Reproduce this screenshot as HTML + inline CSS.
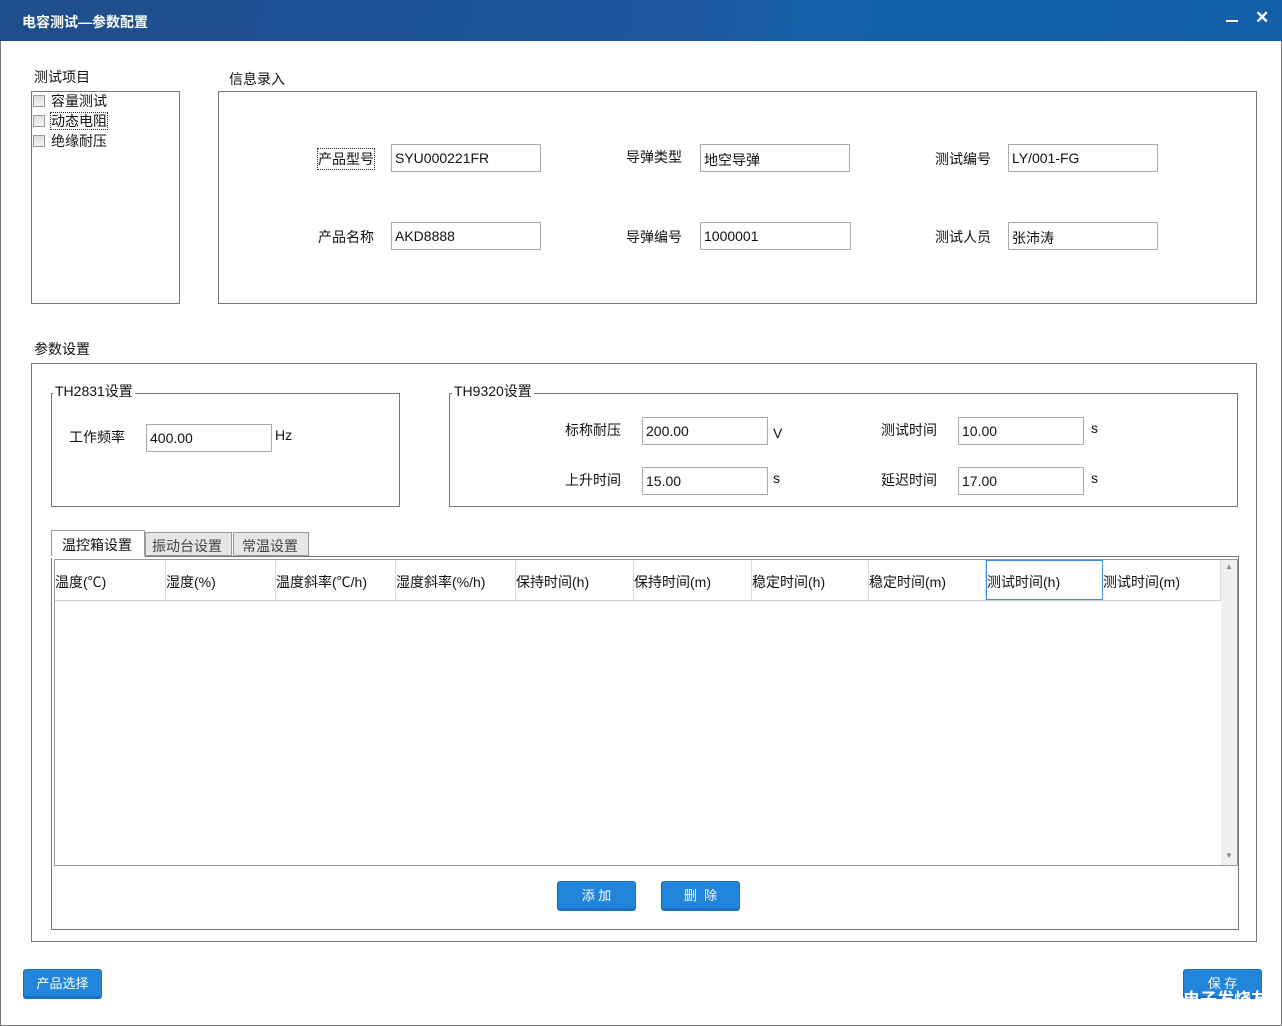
<!DOCTYPE html>
<html><head><meta charset="utf-8"><style>
*{margin:0;padding:0;box-sizing:border-box}
body{width:1282px;height:1026px;position:relative;background:#fff;font-family:"Liberation Sans","Microsoft YaHei","Noto Sans CJK SC",sans-serif;font-size:14px;color:#111;overflow:hidden}
.a{position:absolute}
.box{position:absolute;border:1px solid #777}
.in{position:absolute;border:1px solid #aaa;height:28px;background:#fff;padding:5px 0 0 3px;font-size:14px}
.lb{position:absolute;font-size:14px}
.gl{position:absolute;background:#fff;padding:0 2px;font-size:14px}
.btn{position:absolute;background:#2285dc;border:1px solid #1a6fc0;border-radius:3px;color:#fff;text-align:center;font-size:13px;box-shadow:inset 0 -2px 0 #1a70c8}
.cb{display:inline-block;width:12px;height:12px;border:1px solid #999;background:linear-gradient(#ddd,#f6f6f6);vertical-align:-1px;margin-right:6px}
.th{position:absolute;top:0;height:40px;border-right:1px solid #ddd;padding-top:12px;font-size:14px}
</style></head><body>
<div class="a" style="left:0;top:0;width:1282px;height:41px;background:linear-gradient(100deg,#1f4d8c 0%,#1c5496 40%,#1d58a0 55%,#1560a8 62%,#135fa8 100%)"></div>
<div class="a" style="left:22px;top:12px;color:#fff;font-weight:bold;font-size:14px">电容测试—参数配置</div>
<div class="a" style="left:1226px;top:20px;width:12px;height:2px;background:#fff"></div>
<div class="a" style="left:1255px;top:8px;color:#fff;font-weight:bold;font-size:17px">✕</div>
<div class="a" style="left:0;top:41px;width:1px;height:985px;background:#777"></div>
<div class="a" style="left:1281px;top:41px;width:1px;height:985px;background:#777"></div>
<div class="a" style="left:0;top:1025px;width:1282px;height:1px;background:#777"></div>

<div class="lb" style="left:34px;top:67px">测试项目</div>
<div class="box" style="left:31px;top:91px;width:149px;height:213px"></div>
<div class="lb" style="left:33px;top:91px;line-height:20px">
<div><span class="cb"></span>容量测试</div>
<div><span class="cb"></span><span style="outline:1px dotted #333">动态电阻</span></div>
<div><span class="cb"></span>绝缘耐压</div></div>

<div class="lb" style="left:229px;top:69px">信息录入</div>
<div class="box" style="left:218px;top:91px;width:1039px;height:213px"></div>
<div class="lb" style="left:318px;top:149px;outline:1px dotted #333">产品型号</div>
<div class="in" style="left:391px;top:144px;width:150px">SYU000221FR</div>
<div class="lb" style="left:626px;top:147px">导弹类型</div>
<div class="in" style="left:700px;top:144px;width:150px">地空导弹</div>
<div class="lb" style="left:935px;top:149px">测试编号</div>
<div class="in" style="left:1008px;top:144px;width:150px">LY/001-FG</div>
<div class="lb" style="left:318px;top:227px">产品名称</div>
<div class="in" style="left:391px;top:222px;width:150px">AKD8888</div>
<div class="lb" style="left:626px;top:227px">导弹编号</div>
<div class="in" style="left:700px;top:222px;width:151px">1000001</div>
<div class="lb" style="left:935px;top:227px">测试人员</div>
<div class="in" style="left:1008px;top:222px;width:150px">张沛涛</div>

<div class="lb" style="left:34px;top:339px">参数设置</div>
<div class="box" style="left:31px;top:363px;width:1226px;height:579px"></div>

<div class="box" style="left:51px;top:393px;width:349px;height:114px"></div>
<div class="gl" style="left:53px;top:381px">TH2831设置</div>
<div class="lb" style="left:69px;top:427px">工作频率</div>
<div class="in" style="left:146px;top:424px;width:126px">400.00</div>
<div class="lb" style="left:275px;top:427px">Hz</div>

<div class="box" style="left:449px;top:393px;width:789px;height:114px"></div>
<div class="gl" style="left:452px;top:381px">TH9320设置</div>
<div class="lb" style="left:565px;top:420px">标称耐压</div>
<div class="in" style="left:642px;top:417px;width:126px">200.00</div>
<div class="lb" style="left:773px;top:425px">V</div>
<div class="lb" style="left:881px;top:420px">测试时间</div>
<div class="in" style="left:958px;top:417px;width:126px">10.00</div>
<div class="lb" style="left:1091px;top:420px">s</div>
<div class="lb" style="left:565px;top:470px">上升时间</div>
<div class="in" style="left:642px;top:467px;width:126px">15.00</div>
<div class="lb" style="left:773px;top:470px">s</div>
<div class="lb" style="left:881px;top:470px">延迟时间</div>
<div class="in" style="left:958px;top:467px;width:126px">17.00</div>
<div class="lb" style="left:1091px;top:470px">s</div>

<div class="box" style="left:51px;top:556px;width:1188px;height:374px"></div>
<div class="a" style="left:51px;top:530px;width:94px;height:28px;border:1px solid #999;border-bottom:none;background:#fff;padding:4px 0 0 10px">温控箱设置</div>
<div class="a" style="left:145px;top:532px;width:87px;height:24px;border:1px solid #999;background:#e6e6e6;padding:3px 0 0 6px;color:#444">振动台设置</div>
<div class="a" style="left:233px;top:532px;width:76px;height:24px;border:1px solid #999;background:#e6e6e6;padding:3px 0 0 8px;color:#444">常温设置</div>
<div class="a" style="left:51px;top:556px;width:94px;height:2px;background:#fff"></div>

<div class="box" style="left:54px;top:559px;width:1184px;height:307px;border-color:#999"></div>
<div class="a" style="left:55px;top:560px;width:1166px;height:41px;border-bottom:1px solid #ccc">
<div class="th" style="left:0;width:111px">温度(℃)</div>
<div class="th" style="left:111px;width:110px">湿度(%)</div>
<div class="th" style="left:221px;width:120px">温度斜率(℃/h)</div>
<div class="th" style="left:341px;width:120px">湿度斜率(%/h)</div>
<div class="th" style="left:461px;width:118px">保持时间(h)</div>
<div class="th" style="left:579px;width:118px">保持时间(m)</div>
<div class="th" style="left:697px;width:117px">稳定时间(h)</div>
<div class="th" style="left:814px;width:117px">稳定时间(m)</div>
<div class="th" style="left:931px;width:117px;border:1px solid #3a8ee6;padding-top:11px">测试时间(h)</div>
<div class="th" style="left:1048px;width:118px">测试时间(m)</div>
</div>
<div class="a" style="left:1221px;top:560px;width:16px;height:305px;background:#f0f0f0"></div>
<div class="a" style="left:1225px;top:562px;font-size:8px;color:#888">▲</div>
<div class="a" style="left:1225px;top:851px;font-size:8px;color:#888">▼</div>

<div class="btn" style="left:557px;top:881px;width:79px;height:30px;line-height:28px">添 加</div>
<div class="btn" style="left:661px;top:881px;width:79px;height:30px;line-height:28px">删 &nbsp;除</div>
<div class="btn" style="left:23px;top:969px;width:79px;height:30px;line-height:28px">产品选择</div>
<div class="btn" style="left:1183px;top:969px;width:79px;height:30px;line-height:28px">保 存</div>
<div class="a" style="left:1183px;top:985px;color:#fff;font-weight:bold;font-size:17px;white-space:nowrap">电子发烧友</div>
</body></html>
